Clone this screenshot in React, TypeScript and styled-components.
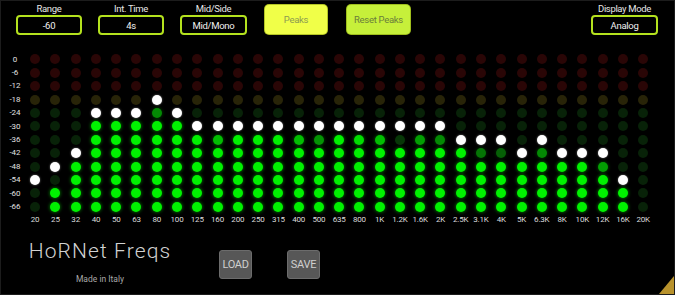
import React from 'react';
import styled, { createGlobalStyle } from 'styled-components';

const GlobalStyle = createGlobalStyle`
  html, body { margin: 0; padding: 0; background: #000; }
  body {
    width: 675px; height: 295px; overflow: hidden;
    font-family: Roboto, "Liberation Sans", sans-serif;
  }
`;

const Frame = styled.div`
  position: relative;
  width: 675px;
  height: 295px;
  box-sizing: border-box;
  background: #000;
  border: 1px solid #1c1c1c;
  display: flex;
  flex-direction: column;
  overflow: hidden;
`;

const Header = styled.div`
  display: flex;
  align-items: flex-start;
  gap: 16px;
  height: 50px;
  box-sizing: border-box;
  padding: 2px 16px 0 15px;
`;

const ControlGroup = styled.div<{ $w: number; $push?: boolean }>`
  display: flex;
  flex-direction: column;
  align-items: center;
  width: ${p => p.$w}px;
  margin-left: ${p => (p.$push ? 'auto' : '0')};
`;

const ControlLabel = styled.div`
  height: 12px;
  line-height: 12px;
  font-size: 9.5px;
  letter-spacing: -0.35px;
  color: #e6e6e6;
  white-space: nowrap;
`;

const ValueBox = styled.div`
  width: 100%;
  height: 20px;
  box-sizing: border-box;
  border: 2px solid #b4e21e;
  border-radius: 4px;
  display: flex;
  align-items: center;
  justify-content: center;
  font-size: 9.5px;
  letter-spacing: -0.3px;
  color: #f0f0f0;
`;

const ToggleButton = styled.div<{ $bg: string; $fg: string; $w: number; $ml: number }>`
  width: ${p => p.$w}px;
  height: 31px;
  margin-top: 1px;
  margin-left: ${p => p.$ml}px;
  box-sizing: border-box;
  background: ${p => p.$bg};
  border: 1px solid rgba(120, 140, 0, 0.5);
  border-radius: 5px;
  display: flex;
  align-items: center;
  justify-content: center;
  font-size: 9.5px;
  letter-spacing: -0.3px;
  color: ${p => p.$fg};
`;

const Meter = styled.div`
  display: flex;
  padding-top: 1.6px;
`;

const Scale = styled.div`
  width: 20px;
  padding-left: 4px;
  display: flex;
  flex-direction: column;
`;

const ScaleLabel = styled.div`
  height: 13.42px;
  line-height: 13.42px;
  font-size: 8px;
  color: #e0e0e0;
  text-align: center;
`;

const Bands = styled.div`
  display: grid;
  grid-template-columns: repeat(31, 20.27px);
`;

const Band = styled.div`
  display: flex;
  flex-direction: column;
  align-items: center;
`;

const Cell = styled.div`
  height: 13.42px;
  width: 100%;
  display: flex;
  align-items: center;
  justify-content: center;
`;

const Dot = styled.div`
  width: 10px;
  height: 10px;
  border-radius: 50%;
`;

const FreqLabel = styled.div`
  margin-top: 1px;
  height: 12px;
  line-height: 12px;
  font-size: 8px;
  letter-spacing: -0.2px;
  color: #dcdcdc;
  white-space: nowrap;
`;

const Footer = styled.div`
  display: flex;
  align-items: flex-start;
  padding: 13px 0 0 28px;
`;

const Brand = styled.div`
  display: flex;
  flex-direction: column;
  align-items: center;
  width: 142px;
  margin-right: 48px;
`;

const Title = styled.div`
  font-size: 21px;
  line-height: 24px;
  font-weight: 300;
  letter-spacing: 1.1px;
  color: #d2d2d2;
  white-space: nowrap;
`;

const Subtitle = styled.div`
  margin-top: 10px;
  font-size: 8.5px;
  line-height: 12px;
  color: #a8a8a8;
`;

const FileButtons = styled.div`
  display: flex;
  gap: 35px;
  margin-top: 11px;
`;

const FileButton = styled.div`
  width: 33px;
  height: 29px;
  box-sizing: border-box;
  background: #575757;
  border: 1px solid #6c6c6c;
  border-radius: 3px;
  display: flex;
  align-items: center;
  justify-content: center;
  font-size: 11px;
  letter-spacing: -0.3px;
  color: #cfcfcf;
`;

const Grip = styled.svg`
  position: absolute;
  right: 0;
  bottom: 0;
`;

const scale = ['0', '-6', '-12', '-18', '-24', '-30', '-36', '-42', '-48', '-54', '-60', '-66'];

type BandData = { f: string; peak: number | null; top: number; part?: number };

const bands: BandData[] = [
  { f: '20', peak: 9, top: 12 },
  { f: '25', peak: 8, top: 10 },
  { f: '32', peak: 7, top: 8 },
  { f: '40', peak: 4, top: 5 },
  { f: '50', peak: 4, top: 5 },
  { f: '63', peak: 4, top: 5 },
  { f: '80', peak: 3, top: 5, part: 0.5 },
  { f: '100', peak: 4, top: 5 },
  { f: '125', peak: 5, top: 6 },
  { f: '160', peak: 5, top: 7, part: 0.75 },
  { f: '200', peak: 5, top: 6 },
  { f: '250', peak: 5, top: 6 },
  { f: '315', peak: 5, top: 6 },
  { f: '400', peak: 5, top: 7, part: 0.75 },
  { f: '500', peak: 5, top: 7, part: 0.55 },
  { f: '635', peak: 5, top: 6 },
  { f: '800', peak: 5, top: 7, part: 0.9 },
  { f: '1K', peak: 5, top: 7, part: 0.75 },
  { f: '1.2K', peak: 5, top: 7, part: 0.1 },
  { f: '1.6K', peak: 5, top: 7, part: 0.6 },
  { f: '2K', peak: 5, top: 7, part: 0.5 },
  { f: '2.5K', peak: 6, top: 7 },
  { f: '3.1K', peak: 6, top: 8, part: 0.4 },
  { f: '4K', peak: 6, top: 8, part: 0.3 },
  { f: '5K', peak: 7, top: 8 },
  { f: '6.3K', peak: 6, top: 8, part: 0.5 },
  { f: '8K', peak: 7, top: 8 },
  { f: '10K', peak: 7, top: 8 },
  { f: '12K', peak: 7, top: 9, part: 0.6 },
  { f: '16K', peak: 9, top: 10 },
  { f: '20K', peak: null, top: 12 },
];

const DIM_RED = [42, 6, 6];
const DIM_YEL = [40, 36, 8];
const DIM_GRN = [8, 34, 8];
const BRIGHT = [0, 242, 0];

const rgb = (c: number[]) => `rgb(${c.map(v => Math.round(v)).join(',')})`;
const mix = (a: number[], b: number[], t: number) => a.map((v, i) => v + (b[i] - v) * t);

function dotStyle(b: BandData, row: number): React.CSSProperties {
  if (b.peak === row) {
    return { background: '#ffffff', boxShadow: '0 0 2px rgba(255,255,255,0.5)' };
  }
  let t = 0;
  if (row >= b.top) t = 1;
  else if (row === b.top - 1 && b.part) t = b.part;
  const dim = row < 3 ? DIM_RED : row === 3 ? DIM_YEL : DIM_GRN;
  if (t === 0) return { background: rgb(dim) };
  return {
    background: rgb(mix(DIM_GRN, BRIGHT, t)),
    boxShadow: `0 0 3px 1px rgba(0,190,0,${0.45 * t})`,
  };
}

export default function App() {
  return (
    <>
      <GlobalStyle />
      <Frame>
        <Header>
          <ControlGroup $w={66}>
            <ControlLabel>Range</ControlLabel>
            <ValueBox>-60</ValueBox>
          </ControlGroup>
          <ControlGroup $w={66}>
            <ControlLabel>Int. Time</ControlLabel>
            <ValueBox>4s</ValueBox>
          </ControlGroup>
          <ControlGroup $w={67}>
            <ControlLabel>Mid/Side</ControlLabel>
            <ValueBox>Mid/Mono</ValueBox>
          </ControlGroup>
          <ToggleButton $bg="#f0ff48" $fg="#8c9a52" $w={64} $ml={1}>Peaks</ToggleButton>
          <ToggleButton $bg="#c6f03a" $fg="#6a7e3a" $w={65} $ml={2}>Reset Peaks</ToggleButton>
          <ControlGroup $w={67} $push>
            <ControlLabel>Display Mode</ControlLabel>
            <ValueBox>Analog</ValueBox>
          </ControlGroup>
        </Header>
        <Meter>
          <Scale>
            {scale.map(s => (
              <ScaleLabel key={s}>{s}</ScaleLabel>
            ))}
          </Scale>
          <Bands>
            {bands.map(b => (
              <Band key={b.f}>
                {scale.map((_, r) => (
                  <Cell key={r}>
                    <Dot style={dotStyle(b, r)} />
                  </Cell>
                ))}
                <FreqLabel>{b.f}</FreqLabel>
              </Band>
            ))}
          </Bands>
        </Meter>
        <Footer>
          <Brand>
            <Title>HoRNet Freqs</Title>
            <Subtitle>Made in Italy</Subtitle>
          </Brand>
          <FileButtons>
            <FileButton>LOAD</FileButton>
            <FileButton>SAVE</FileButton>
          </FileButtons>
        </Footer>
        <Grip width="15" height="18" viewBox="0 0 15 18">
          <polygon points="0,18 15,0 15,18" fill="#b8922c" />
        </Grip>
      </Frame>
    </>
  );
}
